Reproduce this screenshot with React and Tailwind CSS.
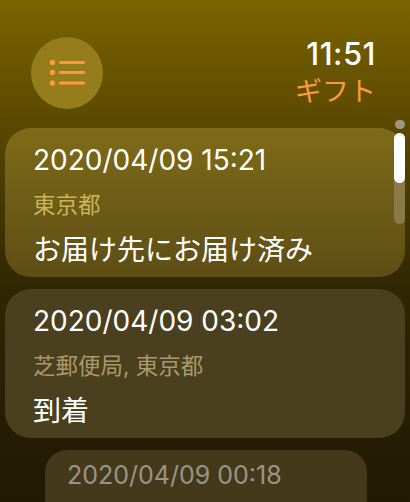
import React from "react";

const jp = { fontFamily: 'Inter, "Noto Sans CJK JP", sans-serif' };

function ListIcon() {
  return (
    <svg width="36" height="28" viewBox="0 0 36 28" fill="none">
      <circle cx="3.5" cy="3.5" r="2.7" fill="#ff9a3c" />
      <circle cx="3.5" cy="13.5" r="2.7" fill="#ff9a3c" />
      <circle cx="3.5" cy="24" r="2.7" fill="#ff9a3c" />
      <path d="M11.5 3.5h23M11.5 13.5h23M11.5 24h23" stroke="#ff9a3c" strokeWidth="3" strokeLinecap="round" />
    </svg>
  );
}

function Entry({ date, place, status, top }) {
  return (
    <div
      className={`mx-[5px] rounded-[26px] px-[28px] pt-[14px] pb-[9px] ${
        top
          ? "bg-gradient-to-b from-[#7e6b18] to-[#5e4e15]"
          : "bg-[#4a3f1e]"
      }`}
    >
      <div className="text-[28px] leading-[36px] text-white">{date}</div>
      <div
        className={`mt-[13px] text-[22.5px] leading-[28px] ${
          top ? "text-[#cbb45c]" : "text-[#a89a6c]"
        }`}
      >
        {place}
      </div>
      <div className="mt-[13px] text-[28px] leading-[36px] text-white">{status}</div>
    </div>
  );
}

export default function App() {
  return (
    <div
      className="relative h-[502px] w-[410px] overflow-hidden bg-[linear-gradient(180deg,#7b6400_0%,#5a4800_25%,#2f2604_58%,#211a03_100%)]"
      style={jp}
    >
      <div className="flex items-start justify-between pl-[31px] pr-[34px] pt-[37px]">
        <div className="flex h-[72px] w-[72px] items-center justify-center rounded-full bg-[#967d1c]">
          <ListIcon />
        </div>
        <div className="flex flex-col items-end">
          <div className="text-[31px] font-medium leading-[34px] tracking-[0.5px] text-white">11:51</div>
          <div className="mt-[4px] text-[27px] leading-[34px] text-[#ff9a3c]">ギフト</div>
        </div>
      </div>
      <div className="mt-[19px] flex flex-col gap-[12px]">
        <Entry top date="2020/04/09 15:21" place="東京都" status="お届け先にお届け済み" />
        <Entry date="2020/04/09 03:02" place="芝郵便局, 東京都" status="到着" />
        <div className="ml-[45px] mr-[43px] h-[80px] rounded-[22px] bg-[#443a1b] px-[22px] pt-[10px]">
          <div className="text-[25px] leading-[30px] text-[#9a9488]">2020/04/09 00:18</div>
        </div>
      </div>
      <div className="absolute right-[5px] top-[120px] h-[9px] w-[10px] rounded-full bg-[#9e9680]" />
      <div className="absolute right-[5px] top-[133px] h-[91px] w-[11px] rounded-full bg-[#8a7a4a]">
        <div className="h-[50px] w-[11px] rounded-full bg-white" />
      </div>
    </div>
  );
}
